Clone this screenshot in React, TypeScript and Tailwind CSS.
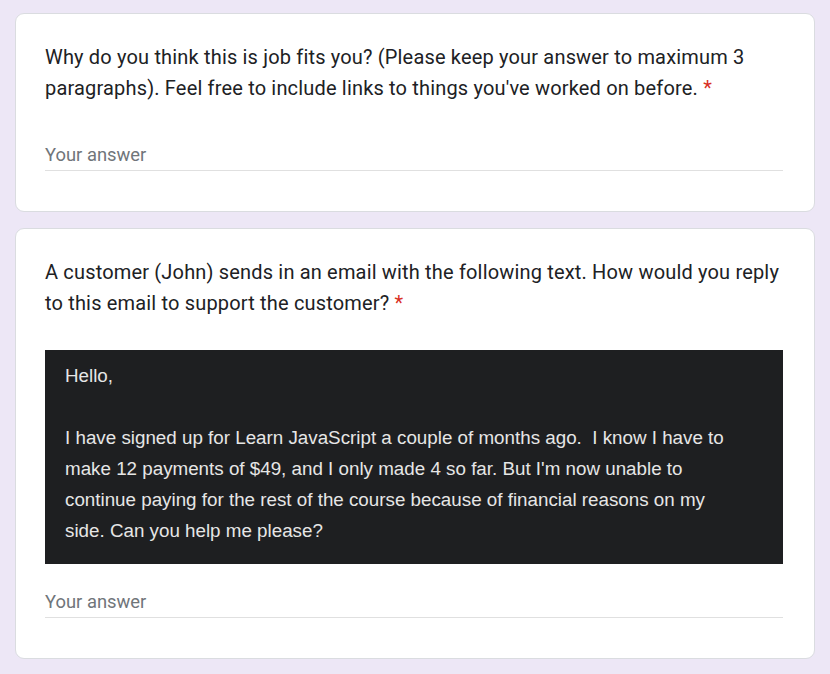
import React from "react";

function AnswerField({ mt }: { mt: string }) {
  return (
    <div className={`${mt} border-b border-[#e0e0e0] pb-[3px]`}>
      <div className="text-[18.4px] leading-[25px] text-[#70757a] font-['Roboto',sans-serif]">Your answer</div>
    </div>
  );
}

export default function App() {
  return (
    <div className="min-h-[674px] w-[830px] bg-[#ede7f6] pt-[13px] pb-[15px] px-[15px] flex flex-col gap-[16px]">
      <div className="bg-white border border-[#dadce0] rounded-[9px] pl-[29px] pr-[31px] pt-[28px] pb-[40px]">
        <div className="text-[20px] tracking-[0.17px] leading-[31px] text-[#202124] font-['Roboto',sans-serif] whitespace-nowrap">
          Why do you think this is job fits you? (Please keep your answer to maximum 3
          <br />
          paragraphs). Feel free to include links to things you've worked on before.{" "}
          <span className="text-[#d93025]">*</span>
        </div>
        <AnswerField mt="mt-[38px]" />
      </div>

      <div className="bg-white border border-[#dadce0] rounded-[9px] pl-[29px] pr-[31px] pt-[28px] pb-[40px]">
        <div className="text-[20px] tracking-[0.17px] leading-[31px] text-[#202124] font-['Roboto',sans-serif] whitespace-nowrap">
          A customer (John) sends in an email with the following text. How would you reply
          <br />
          to this email to support the customer? <span className="text-[#d93025]">*</span>
        </div>
        <div className="mt-[31px] bg-[#1e1f21] pl-[20px] pr-[20px] pt-[10px] pb-[18px] text-[18.8px] leading-[31px] text-[#e6e6e6] font-['Liberation_Sans',Arial,sans-serif] whitespace-pre">
          <div>Hello,</div>
          <div>&nbsp;</div>
          <div>I have signed up for Learn JavaScript a couple of months ago.  I know I have to</div>
          <div>make 12 payments of $49, and I only made 4 so far. But I'm now unable to</div>
          <div>continue paying for the rest of the course because of financial reasons on my</div>
          <div>side. Can you help me please?</div>
        </div>
        <AnswerField mt="mt-[25px]" />
      </div>
    </div>
  );
}
